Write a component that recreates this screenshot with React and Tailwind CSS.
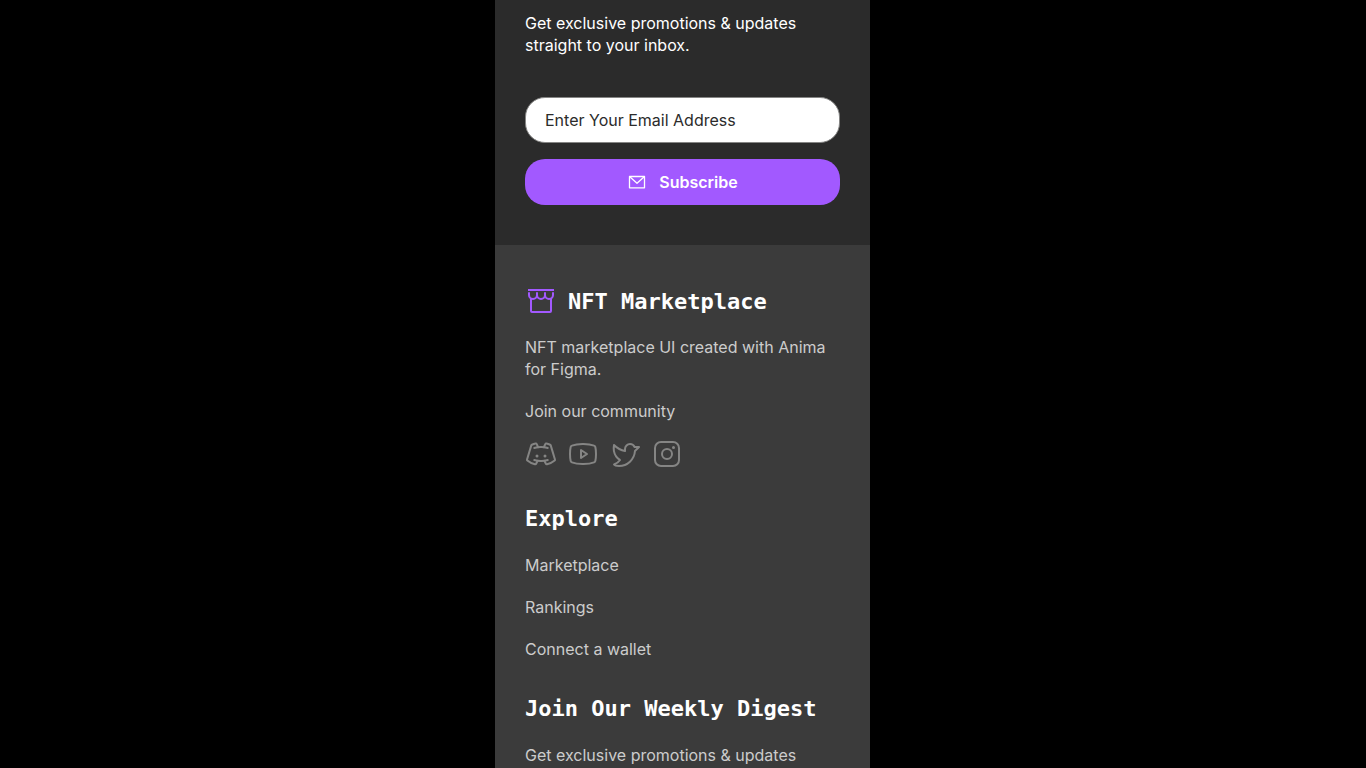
import React from "react";

const SANS = "font-['Inter',sans-serif]";
const HEADING = "font-['DejaVu_Sans_Mono',monospace] text-[22px] leading-[35px] font-bold text-white whitespace-nowrap";

const exploreLinks = ["Marketplace", "Rankings", "Connect a wallet"];

function StrokeIcon({ children }) {
  return (
    <svg
      viewBox="0 0 256 256"
      className="size-8"
      fill="none"
      stroke="currentColor"
      strokeWidth="16"
      strokeLinecap="round"
      strokeLinejoin="round"
      aria-hidden="true"
    >
      {children}
    </svg>
  );
}

function StorefrontIcon() {
  return (
    <svg
      viewBox="0 0 32 32"
      className="size-8 shrink-0 text-[#a259ff]"
      fill="none"
      stroke="currentColor"
      strokeWidth="2"
      strokeLinecap="round"
      strokeLinejoin="round"
      aria-hidden="true"
    >
      <path d="M4 5h24" strokeLinecap="square" />
      <path d="M4 8v2a4 4 0 0 0 8 0V8M12 10a4 4 0 0 0 8 0V8M20 10a4 4 0 0 0 8 0V8" />
      <path d="M6 14v12a1 1 0 0 0 1 1h18a1 1 0 0 0 1-1V14" />
    </svg>
  );
}

function EnvelopeIcon() {
  return (
    <svg
      viewBox="0 0 20 20"
      className="size-5 shrink-0"
      fill="none"
      stroke="currentColor"
      strokeWidth="1.3"
      strokeLinejoin="round"
      aria-hidden="true"
    >
      <path d="M2.5 4.5h15v11.3h-15z" />
      <path d="M2.5 4.5 10 11.3l7.5-6.8" />
    </svg>
  );
}

function DiscordIcon() {
  return (
    <StrokeIcon>
      <circle cx="96" cy="144" r="12" fill="currentColor" stroke="none" />
      <circle cx="160" cy="144" r="12" fill="currentColor" stroke="none" />
      <path d="M74 80a175 175 0 0 1 54-8 175 175 0 0 1 54 8" />
      <path d="M182 176a175 175 0 0 1-54 8 175 175 0 0 1-54-8" />
      <path d="M155 182.100l12 24a7.900 7.900 0 0 0 9 4.200c24.100-6 45.500-16.400 61.300-29.900a8.100 8.100 0 0 0 2.500-8.500L205.700 58.900a7.700 7.700 0 0 0-4.600-5.100 175.600 175.600 0 0 0-29.800-9.200 8.100 8.100 0 0 0-9.300 4.900L151.100 73.800" />
      <path d="M101 182.100l-12 24a7.900 7.900 0 0 1-9 4.200c-24.100-6-45.500-16.400-61.300-29.900a8.100 8.100 0 0 1-2.500-8.500L50.300 58.900a7.700 7.700 0 0 1 4.600-5.100 175.600 175.600 0 0 1 29.800-9.200 8.100 8.100 0 0 1 9.300 4.900l10.900 24.300" />
    </StrokeIcon>
  );
}

function YoutubeIcon() {
  return (
    <StrokeIcon>
      <path d="M160 128l-48-32v64z" />
      <path d="M24 128c0 29.800 3.100 47.200 5.400 56.200A16 16 0 0 0 39.500 195c33.600 12.900 88.500 12.600 88.500 12.600s54.900.3 88.500-12.600a16 16 0 0 0 10.100-10.800c2.300-9 5.400-26.400 5.400-56.200s-3.100-47.200-5.400-56.200a16 16 0 0 0-10.100-10.800C182.900 48.100 128 48.400 128 48.400S73.100 48.100 39.500 61a16 16 0 0 0-10.100 10.800C27.100 80.800 24 98.200 24 128Z" />
    </StrokeIcon>
  );
}

function TwitterIcon() {
  return (
    <StrokeIcon>
      <path d="M128 88c0-22 18.500-40.300 40.500-40a40 40 0 0 1 36.200 24H240l-32.300 32.300A127.900 127.900 0 0 1 80 224c-32 0-40-12-40-12s32-12 48-36c0 0-64-32-48-120 0 0 40 40 88 48Z" />
    </StrokeIcon>
  );
}

function InstagramIcon() {
  return (
    <StrokeIcon>
      <circle cx="128" cy="128" r="40" />
      <rect x="32" y="32" width="192" height="192" rx="48" />
      <circle cx="180" cy="76" r="12" fill="currentColor" stroke="none" />
    </StrokeIcon>
  );
}

const socials = [
  { name: "Discord", Icon: DiscordIcon },
  { name: "YouTube", Icon: YoutubeIcon },
  { name: "Twitter", Icon: TwitterIcon },
  { name: "Instagram", Icon: InstagramIcon },
];

export default function App() {
  return (
    <div className={`${SANS} flex min-h-screen justify-center bg-black pr-px text-base leading-[22px]`}>
      <div className="flex w-full max-w-[375px] flex-col bg-[#3b3b3b]">
        <section className="bg-[#2b2b2b] px-[30px] pt-3 pb-10">
          <p className="text-white">
            Get exclusive promotions &amp; updates
            <br />
            straight to your inbox.
          </p>
          <form className="mt-[41px] flex flex-col gap-4" onSubmit={(e) => e.preventDefault()}>
            <input
              type="email"
              aria-label="Email address"
              placeholder="Enter Your Email Address"
              className="h-[46px] w-full rounded-[20px] border border-[#858584] bg-white px-[19px] text-[#2b2b2b] outline-none placeholder:text-[#2b2b2b]"
            />
            <button
              type="submit"
              className="flex h-[46px] w-full items-center justify-center gap-3 rounded-[20px] bg-[#a259ff] font-semibold text-white"
            >
              <EnvelopeIcon />
              Subscribe
            </button>
          </form>
        </section>

        <footer className="flex flex-col gap-[31px] px-[30px] pt-10 text-[#cccccc]">
          <div>
            <div className="flex h-8 items-center gap-[11px]">
              <StorefrontIcon />
              <span className={HEADING}>NFT Marketplace</span>
            </div>
            <p className="mt-[19px]">
              NFT marketplace UI created with Anima
              <br />
              for Figma.
            </p>
            <p className="mt-5">Join our community</p>
            <div className="mt-4 flex gap-2.5 text-[#858584]">
              {socials.map(({ name, Icon }) => (
                <a key={name} href="#" aria-label={name}>
                  <Icon />
                </a>
              ))}
            </div>
          </div>

          <nav aria-label="Explore" className="flex flex-col gap-[18px]">
            <h2 className={HEADING}>Explore</h2>
            <ul className="flex flex-col items-start gap-5">
              {exploreLinks.map((label) => (
                <li key={label}>
                  <a href="#">{label}</a>
                </li>
              ))}
            </ul>
          </nav>

          <div className="flex flex-col gap-[18px]">
            <h2 className={HEADING}>Join Our Weekly Digest</h2>
            <p>Get exclusive promotions &amp; updates</p>
          </div>
        </footer>
      </div>
    </div>
  );
}
